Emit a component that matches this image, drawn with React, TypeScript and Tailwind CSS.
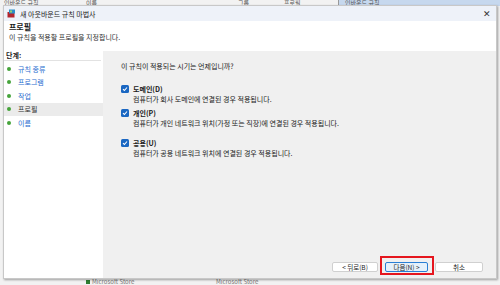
import React from 'react';

const font = { fontFamily: '"Noto Sans CJK KR", "Noto Sans", sans-serif' };

const steps = ['규칙 종류', '프로그램', '작업', '프로필', '이름'];

const options = [
  { label: '도메인(D)', desc: '컴퓨터가 회사 도메인에 연결된 경우 적용됩니다.', gap: 'mt-0' },
  { label: '개인(P)', desc: '컴퓨터가 개인 네트워크 위치(가정 또는 직장)에 연결된 경우 적용됩니다.', gap: 'mt-[4px]' },
  { label: '공용(U)', desc: '컴퓨터가 공용 네트워크 위치에 연결된 경우 적용됩니다.', gap: 'mt-[10px]' },
];

function Check() {
  return (
    <span className="w-[8px] h-[8px] rounded-[1.5px] bg-[#1a67c2] flex items-center justify-center shrink-0">
      <svg width="6" height="6" viewBox="0 0 6 6">
        <path d="M1 3.1 L2.4 4.5 L5 1.5" stroke="#fff" strokeWidth="1.1" fill="none" />
      </svg>
    </span>
  );
}

export default function App() {
  return (
    <div className="w-[500px] h-[285px] bg-[#f2f2f2] relative overflow-hidden text-[#1a1a1a] text-[7px] leading-[10px]" style={font}>
      {/* background app */}
      <div className="flex h-[6px] text-[6px] leading-[6px] text-[#555]">
        <div className="w-[80px] pl-[4px]">인바운드 규칙</div>
        <div className="w-[130px] pl-[6px]">이름</div>
        <div className="w-[70px] pl-[28px]">그룹</div>
        <div className="w-[58px] pl-[4px]">프로필</div>
        <div className="flex-1 bg-[#c6d8ee] pl-[6px] border-l border-[#999]">인바운드 규칙</div>
      </div>
      <div className="absolute left-0 right-0 bottom-0 h-[6px] flex text-[6px] leading-[6px] text-[#777]">
        <div className="w-[86px]" />
        <div className="w-[130px] flex items-center gap-[2px]">
          <span className="w-[4px] h-[4px] bg-[#2e7d32]" />Microsoft Store
        </div>
        <div>Microsoft Store</div>
      </div>

      {/* dialog */}
      <div className="absolute left-[3px] top-[5px] w-[494px] h-[274px] bg-white border border-[#c8c8c8] shadow-[1px_1px_2px_rgba(0,0,0,0.35)] flex flex-col">
        <div className="h-[15px] bg-[#eef2f9] flex items-center px-[3px] text-[7px]">
          <svg width="9" height="9" viewBox="0 0 9 9" className="mr-[4px]">
            <rect x="0.5" y="3" width="7" height="5.5" fill="#b3262d" />
            <rect x="2" y="0.5" width="6" height="4" fill="#2d8fc9" />
            <rect x="3" y="1.5" width="2" height="2" fill="#9bd06b" />
          </svg>
          <span>새 아웃바운드 규칙 마법사</span>
          <span className="ml-auto mr-[2px] text-[9px] leading-none text-[#333]">✕</span>
        </div>
        <div className="h-[30px] px-[5px] pt-0 bg-white">
          <div className="text-[8px] font-bold leading-[11px]">프로필</div>
          <div className="text-[7px] leading-[11px] text-[#333]">이 규칙을 적용할 프로필을 지정합니다.</div>
        </div>
        <div className="flex flex-1 min-h-0">
          <div className="w-[99px] bg-white">
            <div className="text-[7px] font-bold leading-[8px] pl-[2px] pb-[1px] border-b border-[#e2e2e2] mr-[2px]">단계:</div>
            <div className="flex flex-col pt-[1px]">
              {steps.map((s, i) => (
                <div
                  key={s}
                  className={`h-[13.5px] flex items-center pl-[3px] text-[7px] ${i === 3 ? 'bg-[#ebebeb] text-[#333]' : 'text-[#2a6ccf]'}`}
                >
                  <span className="w-[4px] h-[4px] rounded-full bg-[#45a33a] mr-[7px]" />
                  {s}
                </div>
              ))}
            </div>
          </div>
          <div className="flex-1 bg-[#f0f0f0] flex flex-col pl-[18px] pr-[13px] pt-[10px] pb-[6px]">
            <div className="text-[7px] leading-[10px] text-[#222]">이 규칙이 적용되는 시기는 언제입니까?</div>
            <div className="mt-[13px] flex flex-col">
              {options.map((o) => (
                <div key={o.label} className={o.gap}>
                  <div className="flex items-center gap-[4px] h-[10px]">
                    <Check />
                    <span className="font-bold">{o.label}</span>
                  </div>
                  <div className="pl-[12px] h-[10px] text-[#222]">{o.desc}</div>
                </div>
              ))}
            </div>
            <div className="mt-auto flex items-center justify-end gap-[7px]">
              <button className="w-[46px] h-[10px] flex items-center justify-center bg-white border border-[#d0d0d0] rounded-[2px] text-[6.5px] leading-none text-[#222]">
                &lt; 뒤로(B)
              </button>
              <div className="relative flex">
                <button className="w-[43px] h-[10px] flex items-center justify-center bg-[#e5f1fb] border border-[#2a7fd4] rounded-[2px] text-[6.5px] leading-none text-[#222]">
                  다음(N) &gt;
                </button>
                <div className="absolute -left-[5px] -top-[6px] -right-[6px] -bottom-[3px] border-2 border-[#e5161e]" />
              </div>
              <button className="w-[48px] h-[10px] flex items-center justify-center bg-white border border-[#d0d0d0] rounded-[2px] text-[6.5px] leading-none text-[#222]">
                취소
              </button>
            </div>
          </div>
        </div>
      </div>
    </div>
  );
}
